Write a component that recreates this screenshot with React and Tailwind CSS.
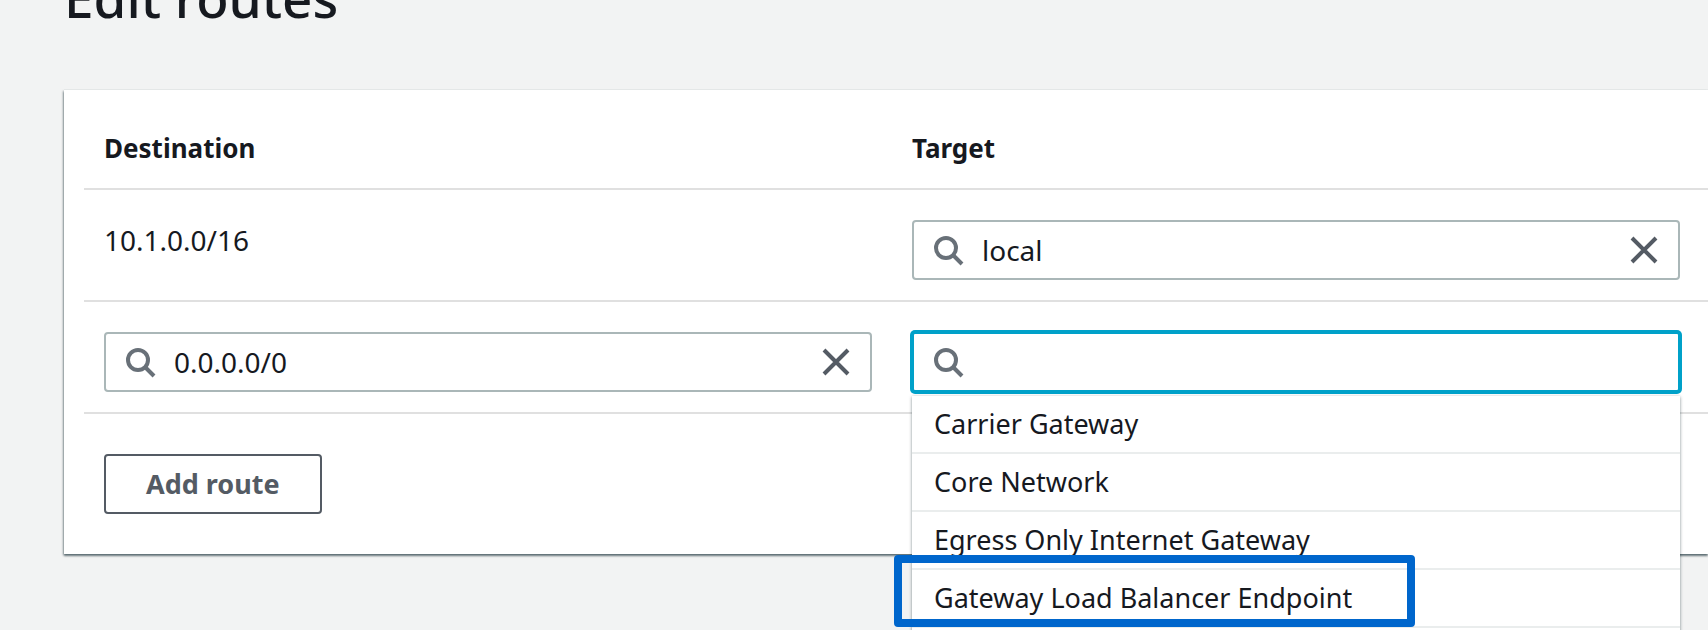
import React from "react";

const targets = [
  "Carrier Gateway",
  "Core Network",
  "Egress Only Internet Gateway",
  "Gateway Load Balancer Endpoint",
];

function SearchIcon() {
  return (
    <svg
      className="h-8 w-8 shrink-0 text-[#687078]"
      viewBox="0 0 32 32"
      fill="none"
      stroke="currentColor"
      strokeWidth="4"
      aria-hidden="true"
    >
      <circle cx="14" cy="14" r="10" />
      <path d="M21 21 L30 30" />
    </svg>
  );
}

function CloseIcon() {
  return (
    <svg
      className="h-8 w-8"
      viewBox="0 0 32 32"
      fill="none"
      stroke="currentColor"
      strokeWidth="4"
      aria-hidden="true"
    >
      <path d="M4 4 L28 28 M28 4 L4 28" />
    </svg>
  );
}

function SearchField({ label, value, active }) {
  return (
    <div
      className={
        active
          ? "flex h-[60px] items-center rounded-[3px] border-2 border-[#00a1c9] bg-white pr-5 pl-[18px] ring-2 ring-[#00a1c9]"
          : "flex h-[60px] items-center rounded-[4px] border-2 border-[#aab7b8] bg-white pr-[18px] pl-[18px]"
      }
    >
      <SearchIcon />
      <input
        type="text"
        aria-label={label}
        defaultValue={value}
        className="ml-[18px] min-w-0 flex-1 bg-transparent text-[28px] leading-10 outline-none"
      />
      {value && (
        <button type="button" aria-label={`Clear ${label}`} className="text-[#545b64]">
          <CloseIcon />
        </button>
      )}
    </div>
  );
}

export default function App() {
  return (
    <div className="h-screen overflow-hidden bg-[#f2f3f3] font-['Noto_Sans',sans-serif] text-[27px] leading-10 text-[#16191f]">
      <main className="-mt-10 pl-16">
        <h1 className="text-[53px] leading-[76px] font-medium">Edit routes</h1>
        <section className="mt-[54px] bg-white pb-10 pl-5 shadow-[0_2px_2px_0_rgba(0,28,36,0.5),-1px_1px_2px_0_rgba(0,28,36,0.3),0_-1px_0_0_#eaeded]">
          <table className="w-full table-fixed border-collapse text-left">
            <thead>
              <tr className="border-b-2 border-[#e0e0e0] text-[26px]">
                <th className="px-5 pt-[38px] pb-5 font-bold">Destination</th>
                <th className="px-5 pt-[38px] pb-5 font-bold">Target</th>
                <td className="w-2"></td>
              </tr>
            </thead>
            <tbody className="align-top">
              <tr className="border-b-2 border-[#e0e0e0]">
                <td className="px-5 pt-[30px] pb-5 text-[28px]">10.1.0.0/16</td>
                <td className="px-5 pt-[30px] pb-5">
                  <SearchField label="Target 1" value="local" />
                </td>
                <td></td>
              </tr>
              <tr className="border-b-2 border-[#e0e0e0]">
                <td className="px-5 pt-[30px] pb-5">
                  <SearchField label="Destination 2" value="0.0.0.0/0" />
                </td>
                <td className="px-5 pt-[30px] pb-5">
                  <div className="relative">
                    <SearchField label="Target 2" value="" active />
                    <ul
                      role="listbox"
                      aria-label="Target types"
                      className="absolute inset-x-0 top-full mt-1 bg-white pb-10 shadow-[0_1px_3px_0_rgba(0,28,36,0.5)] [clip-path:inset(-2px_-4px_-4px_-4px)]"
                    >
                      {targets.map((name) => (
                        <li
                          key={name}
                          role="option"
                          aria-selected="false"
                          className="border-b-2 border-[#eaeded] px-[22px] py-2"
                        >
                          {name}
                        </li>
                      ))}
                    </ul>
                    <div className="pointer-events-none absolute top-[223px] -left-[18px] h-[72px] w-[521px] rounded-[4px] border-8 border-[#0066cc]"></div>
                  </div>
                </td>
                <td></td>
              </tr>
            </tbody>
          </table>
          <button
            type="button"
            className="mt-10 ml-5 flex h-[60px] items-center rounded-[4px] border-2 border-[#545b64] bg-white px-10 font-bold text-[#545b64]"
          >
            Add route
          </button>
        </section>
      </main>
    </div>
  );
}
